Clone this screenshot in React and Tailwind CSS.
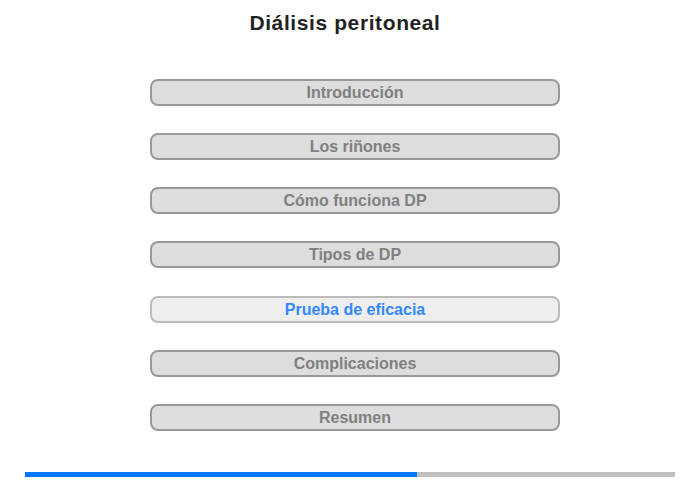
import React from "react";

const items = [
  "Introducción",
  "Los riñones",
  "Cómo funciona DP",
  "Tipos de DP",
  "Prueba de eficacia",
  "Complicaciones",
  "Resumen",
];

export default function App() {
  return (
    <div
      className="relative w-[700px] h-[480px] bg-white overflow-hidden"
      style={{ fontFamily: '"Liberation Sans", Arial, sans-serif' }}
    >
      <div className="pt-[10px] h-[79px] flex justify-center">
        <h1 className="ml-[-10px] text-center text-[21px] leading-[25px] tracking-[0.6px] font-bold text-[#222222] whitespace-nowrap">
          Diálisis peritoneal
        </h1>
      </div>
      <div className="ml-[150px] w-[410px] flex flex-col gap-[27px]">
        {items.map((t, i) => {
          const active = i === 4;
          return (
            <div
              key={t}
              className={
                active
                  ? "mt-[1px] h-[27px] rounded-[8px] border-2 border-[#bbbbbb] bg-[#eeeeee] flex items-center justify-center text-[16px] font-bold text-[#3388ff]"
                  : "h-[27px] rounded-[8px] border-2 border-[#999999] bg-[#dddddd] flex items-center justify-center text-[16px] font-bold text-[#808080]"
              }
            >
              {t}
            </div>
          );
        })}
      </div>
      <div className="absolute left-[25px] top-[472px] w-[650px] h-[5px] bg-[#c0c0c0] flex">
        <div className="w-[392px] h-full bg-[#0077ff]" />
      </div>
    </div>
  );
}
